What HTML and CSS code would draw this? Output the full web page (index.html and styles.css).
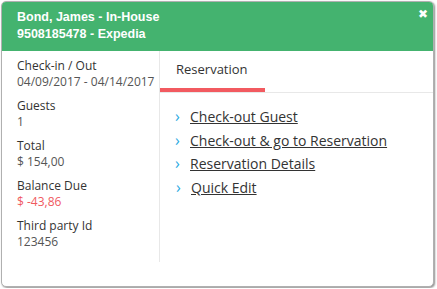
FILE: index.html
```html
<!DOCTYPE html>
<html lang="en">
<head>
    <meta charset="UTF-8">
    <title>Reservation popup</title>
    <link rel="stylesheet" href="styles.css">
</head>
<body>

    <!-- popup -->
    <div class="popup">
        <div class="popup-header">
            <div class="guest-name">Bond, James - In-House</div>
            <div class="guest-source">9508185478 - Expedia</div>
            <span class="close-btn">&#10006;</span>
        </div>

        <div class="popup-body">
            <!-- details -->
            <div class="details">
                <div class="detail">
                    <div class="detail-label">Check-in / Out</div>
                    <div class="detail-value">04/09/2017 - 04/14/2017</div>
                </div>
                <div class="detail">
                    <div class="detail-label">Guests</div>
                    <div class="detail-value">1</div>
                </div>
                <div class="detail">
                    <div class="detail-label">Total</div>
                    <div class="detail-value">$ 154,00</div>
                </div>
                <div class="detail">
                    <div class="detail-label">Balance Due</div>
                    <div class="detail-value negative">$ -43,86</div>
                </div>
                <div class="detail">
                    <div class="detail-label">Third party Id</div>
                    <div class="detail-value">123456</div>
                </div>
            </div>

            <!-- actions -->
            <div class="actions">
                <div class="tabs">
                    <div class="tab active">Reservation</div>
                </div>
                <ul class="action-list">
                    <li><a href="#">Check-out Guest</a></li>
                    <li><a href="#">Check-out &amp; go to Reservation</a></li>
                    <li><a href="#">Reservation Details</a></li>
                    <li class="indent"><a href="#">Quick Edit</a></li>
                </ul>
            </div>
        </div>
    </div>

</body>
</html>
```

FILE: styles.css
```css
body {
    margin: 0;
    padding: 1px;
    background: #fff;
    font-family: "Open Sans", sans-serif;
    color: #333;
}

/* popup */
.popup {
    width: 431px;
    height: 284px;
    border: 1px solid #b0b0b0;
    border-radius: 5px;
    box-shadow: 1px 1px 2px rgba(0, 0, 0, 0.45);
    overflow: hidden;
    background: #fff;
    display: flex;
    flex-direction: column;
}

.popup-header {
    position: relative;
    background-color: #44b36f;
    color: #fff;
    font-family: "Liberation Sans", Arial, sans-serif;
    font-weight: bold;
    font-size: 12.5px;
    line-height: 17px;
    padding: 7px 15px 8px;
    height: 34px;
}

.close-btn {
    position: absolute;
    top: 4px;
    right: 5px;
    font-family: "DejaVu Sans", sans-serif;
    font-size: 12px;
}

.popup-body {
    display: flex;
    flex: 1;
    padding-bottom: 24px;
}

/* details */
.details {
    width: 142px;
    padding: 7px 0 0 15px;
    border-right: 1px solid #e8e8e8;
    font-size: 12px;
    line-height: 16px;
}

.detail {
    margin-bottom: 8px;
}

.detail-label {
    color: #333;
}

.detail-value {
    color: #555;
}

.detail-value.negative {
    color: #f05a5f;
}

/* actions */
.actions {
    flex: 1;
}

.tabs {
    display: flex;
    border-bottom: 1px solid #e8e8e8;
}

.tab {
    width: 89px;
    padding: 9px 0 0 16px;
    height: 28px;
    font-size: 13px;
    border-bottom: 4px solid transparent;
}

.tab.active {
    border-bottom-color: #f25a60;
}

.action-list {
    list-style: none;
    margin: 0;
    padding: 12px 0 0 15px;
    font-size: 14px;
    line-height: 23.5px;
}

.action-list li::before {
    content: "\203A";
    color: #2aaae2;
    display: inline-block;
    width: 15px;
    font-size: 16px;
}

.action-list li.indent {
    padding-left: 1px;
}

.action-list a {
    color: #333;
}
```
